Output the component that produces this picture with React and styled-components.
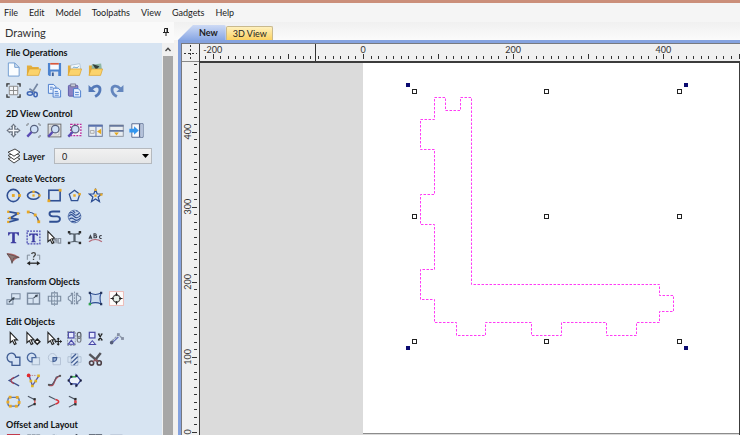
import React from 'react';
import styled, { createGlobalStyle } from 'styled-components';

const COLORS = {
  title: '#cb8f7a',
  menu: '#f5f5f5',
  panel: '#d7e4f2',
  frame: '#84a2df',
  ruler: '#f0f0f0',
  dark: '#3c3c3c',
  text: '#1c1c1c',
  navy: '#2f4f93',
  orange: '#e9a823',
  gray: '#7b8ba0',
  thumb: '#a7a7a7',
  desk: '#dbdbdb',
  vector: '#ff3cf5',
};

const { navy, orange, gray } = COLORS;

const GlobalStyle = createGlobalStyle`
  *, *::before, *::after {
    box-sizing: border-box;
  }

  body {
    margin: 0;
    overflow: hidden;
    background: ${COLORS.menu};
    color: ${COLORS.text};
    font-family: Lato, 'Open Sans', sans-serif;
    font-size: 9px;
  }

  button, select {
    font: inherit;
    color: inherit;
  }
`;

/* Orange node handles that sit on the vector icons */
const Nodes = ({ at, fill = orange, size = 3 }) =>
  at.map(([x, y]) => (
    <rect key={`${x}-${y}`} x={x - size / 2} y={y - size / 2} width={size} height={size} fill={fill} />
  ));

const Pointer = ({ x = 0 }) => (
  <path
    d="M4.5 1.5v11l2.5-2.3 2 4.3 1.8-.9-2-4.1h3.4z"
    transform={`translate(${x} 0)`}
    fill="#fff"
    stroke="#222"
    strokeWidth="1.2"
  />
);

const Lens = () => (
  <>
    <circle cx="8.8" cy="6.6" r="4" fill="#cfe0f7" stroke="#56607c" strokeWidth="1.3" />
    <path d="M6 9.6l-4.6 4.9" stroke="#5a4bb5" strokeWidth="2.6" />
  </>
);

const Folder = ({ children }) => (
  <>
    <path d="M1 13.8V3.6h4.6l1.4 1.6h6.6v8.6z" fill="#e3ad3c" />
    {children}
    <path d="M1 14.3L3.6 7.4h12L13.4 14.3z" fill="#fbd36c" stroke="#d9a02f" strokeWidth=".7" />
  </>
);

const ICONS = {
  'New file': (
    <path d="M2.5 1h6.8l4.7 4.7V15H2.5zM9.3 1v4.7H14" fill="#fafdff" stroke="#6f9cd0" />
  ),
  'Open file': <Folder />,
  'Save file': (
    <>
      <path d="M1 1h14v14H2.4L1 13.6z" fill="#4c83cf" />
      <path d="M3.4 1h9.2v7H3.4z" fill="#f7faff" />
      <path d="M3.4 1h9.2v1.8H3.4z" fill="#d9583d" />
      <path d="M4 10.2h8V15H4z" fill="#dbe3ee" />
      <path d="M5.2 11.2h2V15h-2z" fill="#3a5d95" />
    </>
  ),
  'Import vectors': (
    <Folder>
      <path d="M4 3.4l9.6-1.6 1 6H4z" fill="#f4f9fd" stroke="#9db4c9" strokeWidth=".7" />
      <path d="M6 6.4c2-2.4 4 1.4 6.4-1.6" fill="none" stroke="#5a9ac5" />
    </Folder>
  ),
  'Import bitmap': (
    <Folder>
      <path d="M4 3l10-1.4.8 6.4H4z" fill="#8fb7a6" />
      <path d="M4.6 2.2l7.6 2.4-3.4 3.8z" fill="#333f3c" />
    </Folder>
  ),
  'Job setup': (
    <>
      <path d="M1 4V1h3M12 1h3v3M15 12v3h-3M4 15H1v-3" fill="none" stroke="#333" strokeWidth="1.4" />
      <path d="M3.5 3.5h9v9h-9zM8 3.5v9M3.5 8h9" fill="#f3f5f8" stroke="#888" />
    </>
  ),
  Cut: (
    <>
      <path d="M12.4.8L6.6 10M3.6 6.2L9.6 10" stroke="#7587a3" strokeWidth="1.8" />
      <ellipse cx="4.2" cy="11.2" rx="2.8" ry="1.8" fill="none" stroke="#3e65b4" strokeWidth="1.6" />
      <ellipse cx="10.2" cy="12.2" rx="1.8" ry="2.4" fill="none" stroke="#3e65b4" strokeWidth="1.6" />
    </>
  ),
  Copy: (
    <>
      <path d="M1.5 1.5H7L9.5 4v7h-8z" fill="#e9f2ff" stroke="#4a7ccc" />
      <path d="M6.5 5.5H12L14.5 8v7h-8z" fill="#e9f2ff" stroke="#4a7ccc" />
      <path d="M3.2 4.5h3M3.2 6.5h2M8.2 9h3.4M8.2 11h4.4M8.2 13h4.4" stroke="#4a7ccc" />
    </>
  ),
  Paste: (
    <>
      <rect x="1.5" y="2.5" width="10" height="11.5" rx="1" fill="#8c83c4" stroke="#5c5aa5" />
      <rect x="4" y="1" width="5" height="3" fill="#c9ccd9" stroke="#6d6f8a" strokeWidth=".8" />
      <path d="M7 6h5l2.5 2.5V15H7z" fill="#e9f2ff" stroke="#4a7ccc" />
      <path d="M8.6 10h4M8.6 12.5h4" stroke="#4a7ccc" />
    </>
  ),
  Undo: (
    <>
      <path d="M4 6C8 1.6 13.2 3 12.8 7.6c-.2 3-2.6 5.4-5.2 6.8" fill="none" stroke="#5479b8" strokeWidth="3" />
      <path d="M.6 2v7.6h7.6z" fill="#5479b8" />
    </>
  ),
  Redo: (
    <>
      <path d="M12 6C8 1.6 2.800 3 3.200 7.6c.2 3 2.600 5.400 5.200 6.800" fill="none" stroke="#6486be" strokeWidth="3" />
      <path d="M15.4 2v7.6H7.800z" fill="#6486be" />
    </>
  ),
  Pan: (
    <>
      <path d="M8 .4l3.200 3.800H4.800zM8 15.600l3.200-3.800H4.800zM.4 8l3.800-3.200v6.400zM15.600 8l-3.800-3.200v6.400z" fill="#69727f" />
      <path d="M8 3v10M3 8h10" stroke="#69727f" strokeWidth="4" />
      <path d="M8 2.600v10.800M2.600 8h10.800" stroke="#f4f7fa" strokeWidth="1.400" />
    </>
  ),
  'Zoom interactive': (
    <>
      <path d="M1 3V1h2M13 1h2v2M15 13v2h-2" fill="none" stroke="#555" strokeDasharray="1.5 1" />
      <Lens />
    </>
  ),
  'Zoom to drawing': (
    <>
      <rect x="1.2" y="1.2" width="13.6" height="13.6" fill="#f6f8fa" stroke="#666" />
      <rect x="3.2" y="3.2" width="9.6" height="9.6" fill="none" stroke="#aaa" strokeWidth=".8" />
      <Lens />
    </>
  ),
  'Zoom to selection': (
    <>
      <rect x="4" y="1.4" width="10.8" height="12" fill="#f3eef7" stroke="#bb2a9c" strokeWidth="1.4" strokeDasharray="2 1.2" />
      <Lens />
    </>
  ),
  'Tile side by side': (
    <>
      <rect x=".8" y="2.2" width="14.4" height="12" fill="#e8edf1" stroke="#647397" />
      <path d="M.5 3h15" stroke="#5870ad" strokeWidth="2" />
      <path d="M8.5 4v10" stroke="#5870ad" />
      <path d="M2.5 8h4v3h-4z" fill="none" stroke="#aaa" />
      <path d="M14 6v6L9.6 9z" fill="#e5a91c" />
    </>
  ),
  'Tile above': (
    <>
      <rect x=".8" y="2.2" width="14.4" height="12" fill="#e8edf1" stroke="#8b929d" />
      <path d="M.5 3h15M.5 8.4h15" stroke="#66779c" strokeWidth="1.8" />
      <path d="M5.5 10.2h5L8 13.4z" fill="#e5a91c" />
    </>
  ),
  'Switch to toolpaths': (
    <>
      <path d="M3 .8h12v14.4H3z" fill="#f7f9fc" stroke="#55698f" />
      <path d="M11.4 1v14" stroke="#4b5d85" strokeWidth="1.6" />
      <path d="M12.4 1.4h2.2v13.2h-2.2z" fill="#b3c2dc" />
      <path d="M.4 6h5V3.4L10.4 8l-5 4.6V10h-5z" fill="#3396ee" />
    </>
  ),
  'Draw circle': (
    <>
      <circle cx="7.8" cy="8" r="6.5" fill="none" stroke={navy} strokeWidth="1.7" />
      <Nodes at={[[7.8, 8], [14.4, 8]]} />
    </>
  ),
  'Draw ellipse': (
    <>
      <ellipse cx="8" cy="8" rx="6.4" ry="4" fill="none" stroke={navy} strokeWidth="1.8" />
      <Nodes at={[[8, 8], [14.4, 8], [8, 4]]} size={2.4} />
    </>
  ),
  'Draw rectangle': (
    <>
      <rect x="2" y="2.4" width="12" height="11.2" fill="none" stroke={navy} strokeWidth="1.7" />
      <Nodes at={[[14, 2.4], [2, 13.6]]} />
    </>
  ),
  'Draw polygon': (
    <>
      <path d="M8 2.4l5.6 4.2-2.2 6.8H4.6L2.4 6.6z" fill="none" stroke={navy} strokeWidth="1.3" />
      <Nodes at={[[8, 8], [13.4, 6.6]]} size={2.6} />
    </>
  ),
  'Draw star': (
    <>
      <path
        d="M8 1.6l1.8 4.6 4.8.2-3.8 3.2 1.4 4.8L8 11.6l-4.2 2.8 1.4-4.8L1.4 6.4l4.8-.2z"
        fill="none"
        stroke={navy}
        strokeWidth="1.3"
      />
      <Nodes at={[[8, 8.2], [8, 2], [14.2, 7]]} size={2.4} />
    </>
  ),
  'Draw polyline': (
    <>
      <path d="M2.4 2.8l10.4 2L4 9.8l9.4 1.4L2.4 14" fill="none" stroke={navy} strokeWidth="1.9" />
      <Nodes at={[[2.4, 3], [12.8, 4.8], [4, 9.6], [2.4, 13.8]]} size={2.4} />
    </>
  ),
  'Draw arc': (
    <>
      <path d="M2.4 3.2c6 .6 9.8 3.8 11 10.2" fill="none" stroke={navy} strokeWidth="1.3" />
      <Nodes at={[[2.4, 3.2], [9.8, 6.4], [13.6, 13.6]]} />
    </>
  ),
  'Draw curve': (
    <path
      d="M14 2.6H6.4c-5 0-5 5 0 5.2h4.4c4.4.6 3.8 5.8-.6 5.8H2.4"
      fill="none"
      stroke={navy}
      strokeWidth="2"
    />
  ),
  'Vector texture': (
    <>
      <circle cx="8" cy="8" r="6.8" fill="#c4d4ec" stroke="#4d6ba6" strokeWidth=".8" />
      <path
        d="M1.6 8c2.600-3.600 4.400-1.600 6 0s3.800 2.600 7-1.600M2.400 11c2.600-2.800 4-1 5.600.2 2 1.600 4 1 6.200-1.400M4.600 13.600c1.800-1.200 2.800-.2 4.800.6M2.600 4.600c2.400-1.800 4-.4 5.200 1.200 1.400 1.600 3.400.8 5.600-2M6 1.800c1.200.6 1.600 1.800 2.800 2.200M10 1.600l1.200 1.200"
        fill="none"
        stroke={navy}
        strokeWidth="1.2"
      />
    </>
  ),
  'Draw text': (
    <path d="M2.2 2.4h11.6v3.4h-1.2c-.2-1.4-.8-2-3.2-2v8.8l1.6.8v.6H5v-.6l1.6-.8V3.8c-2.4 0-3 .6-3.2 2H2.2z" fill="#3c3ca0" />
  ),
  'Draw auto text': (
    <>
      <rect x="1.2" y="1.2" width="13.6" height="13.6" fill="none" stroke="#4646b0" strokeWidth="1.3" strokeDasharray="2 1.2" />
      <path d="M3.4 3.6h9.2v2.8h-1c-.2-1-.8-1.4-2.4-1.4v6.8l1.4.6v.6H5.4v-.6l1.4-.6V5c-1.6 0-2.2.4-2.4 1.4h-1z" fill="#3c3ca0" />
    </>
  ),
  'Edit text': (
    <>
      <Pointer x={-3.5} />
      <path d="M8.5 14V9h2v5M8.5 11.5h2M12 9v5h2.6V9z" fill="none" stroke="#8a93a1" strokeWidth="1.2" />
    </>
  ),
  'Text to box': (
    <>
      <path d="M2.4 2.6c3.8 1.6 7.4 1.6 11.2 0v2.8h-1C11.4 4.4 10.4 5 9.2 5v6.6l3.4.8v1c-3-.8-6.2-.8-9.2 0v-1l3.4-.8V5C5.6 5 4.6 4.4 3.4 5.4h-1z" fill="#55606b" />
      <Nodes at={[[2.2, 2.4], [13.8, 2.4], [2.2, 13.8], [13.8, 13.8]]} fill="#2b2b2b" size={2.6} />
    </>
  ),
  'Text on curve': (
    <>
      <path d="M1 9.4L2.6 6l1.6 3.4M1.6 8.4h2M6.4 4v4.2h1.8c1.4 0 1.4-2.1 0-2.1H6.4h1.4c1.2 0 1.2-2.1 0-2.1zM14.6 6c-2.8-1-3.4 3.6 0 3" fill="none" stroke="#3f4149" strokeWidth="1.2" />
      <path d="M1 12.6c4-3 9.6-3 13.8 0" fill="none" stroke="#b56a79" strokeWidth="1.4" />
    </>
  ),
  'Trace bitmap': (
    <>
      <path d="M.8 2.6c4-.8 9.6 1 13.8 4.2-3 .6-4.6 2.4-8 5.4z" fill="#b5686a" />
      <path d="M1 3l5.4 1.4L14 7l-6 .6-1.6 5.6L5 8z" fill="#8d7775" stroke="#55494b" strokeWidth=".8" />
    </>
  ),
  Dimension: (
    <>
      <path d="M1.4 9.4v-5h3M11.6 4.4h3v5" fill="none" stroke="#7b8794" />
      <path d="M6 3.2c.4-2 4-2 4 .2C10 5 8 5 8 7M8 8.4v1.2" fill="none" stroke="#444" strokeWidth="1.4" />
      <path d="M3 13h10" stroke="#222" strokeWidth="1.3" />
      <path d="M.8 13l3.6-2.4v4.8zM15.2 13l-3.6-2.4v4.8z" fill="#222" />
    </>
  ),
  'Move objects': (
    <>
      <path d="M6 3h9v5.4H6zM1 9.4h6.4V14H1z" fill="none" stroke={gray} strokeWidth="1.1" />
      <path d="M3 12l5-4.4" stroke="#3b4653" strokeWidth="1.2" />
      <path d="M9.2 6.4L5.8 7.4l2.6 2.4z" fill="#3b4653" />
    </>
  ),
  'Set size': (
    <>
      <path d="M1.6 2.4h12.8v11.4H1.6z" fill="none" stroke={gray} strokeWidth="1.5" />
      <path d="M1.6 7.8h6v6" fill="none" stroke={gray} />
      <path d="M8 7.6L11.4 4.8" stroke="#3b4653" strokeWidth="1.1" />
      <path d="M12.8 3.6l-3.4.6 2.4 2.6z" fill="#3b4653" />
    </>
  ),
  'Align objects': (
    <>
      <path d="M5 2h6v12H5zM1.4 5.6h13.2v5H1.4z" fill="none" stroke={gray} strokeWidth="1.2" />
      <path d="M8 0v16" stroke={gray} strokeWidth=".8" strokeDasharray="2 1" />
    </>
  ),
  'Mirror objects': (
    <>
      <path d="M6 2.4v11.2H4.6v-2.4L1.4 9V6.4l3.2-2v-2zM10 2.4v11.2h1.4v-2.4L14.6 9V6.4l-3.2-2v-2z" fill="none" stroke={gray} strokeWidth="1.1" />
      <path d="M8 .6v15" stroke={gray} strokeWidth=".9" strokeDasharray="2 1" />
    </>
  ),
  'Distort object': (
    <>
      <path d="M2 2.2c4 2 8 2 12 0-1.6 4-1.6 7.6 0 11.6-4-1.8-8-1.8-12 0 1.6-4 1.6-7.6 0-11.6z" fill="#c9daf0" stroke={navy} strokeWidth="1.2" />
      <Nodes at={[[2, 2], [14, 2], [14, 14]]} fill="#27375f" size={2.4} />
      <Nodes at={[[2, 14]]} fill="#2fa44a" size={2.6} />
    </>
  ),
  'Center in material': (
    <>
      <rect x=".6" y=".6" width="14.8" height="14.8" fill="#fdfcfb" stroke="#edb9b5" />
      <circle cx="8" cy="8" r="3.6" fill="#e6f0ea" stroke="#555" strokeWidth="1.1" />
      <path d="M8 1.6v3M8 11.4v3M1.6 8h3M11.4 8h3" stroke="#222" strokeWidth="1.2" />
      <path d="M8 5.4l1.6-2H6.400zM8 10.600l1.600 2H6.400zM5.400 8l-2-1.600v3.200zM10.600 8l2-1.600v3.200z" fill="#222" />
    </>
  ),
  Select: <Pointer />,
  'Node editing': (
    <>
      <Pointer x={-3.5} />
      <path d="M12 8.6l2.8 2.8-2.8 2.8-2.8-2.8z" fill="#fff" stroke="#222" strokeWidth="1.6" />
    </>
  ),
  'Interactive transform': (
    <>
      <Pointer x={-3.5} />
      <path d="M12 7.6v7M8.6 11.2h7" stroke="#222" strokeWidth="1.3" />
      <path d="M12 6.8l1.8 2h-3.6zM12 15.6l1.8-2h-3.6zM7.8 11.2l2-1.8V13zM16 11.2l-2-1.8V13z" fill="#222" />
    </>
  ),
  Group: (
    <>
      <rect x="1.4" y="1.4" width="6" height="6" fill="#e6e9ff" stroke="#4747a5" strokeWidth="1.3" />
      <path d="M1.2 14.2l3.4-4.4L8 14.2z" fill="#e6e9ff" stroke="#4747a5" strokeWidth="1.1" />
      <path d="M.4.6h8.4v15H.4z" fill="none" stroke="#7b8390" strokeWidth=".8" strokeDasharray="2 1" />
      <rect x="11" y="1.4" width="3.8" height="6.4" rx="1.9" fill="none" stroke="#555b63" strokeWidth="1.3" />
      <rect x="11" y="5.6" width="3.8" height="6.4" rx="1.9" fill="none" stroke="#777d85" strokeWidth="1.3" />
    </>
  ),
  Ungroup: (
    <>
      <rect x="1.4" y="1.4" width="6" height="6" fill="#e6e9ff" stroke="#4747a5" strokeWidth="1.3" />
      <path d="M1.2 14.4l3.4-4L8 14.4z" fill="#e6e9ff" stroke="#4747a5" strokeWidth="1.1" />
      <path d="M11.4 3.4l3.2 6M14.6 3.4l-3.2 6M10.6 3.2h2M13.6 3.2h2M10.6 9.4h2M13.6 9.4h2" stroke="#222" strokeWidth="1.3" />
    </>
  ),
  Measure: (
    <>
      <path d="M3 11l7-7 4.4 4" fill="none" stroke="#8d99ab" strokeWidth="1.4" strokeDasharray="3 1" />
      <path d="M3.6 12.4L10 6.4" stroke="#5b66b5" strokeWidth="1.1" />
      <circle cx="2.8" cy="12.4" r="1.9" fill="#555c78" />
      <Nodes at={[[10, 3.8], [14.4, 8]]} fill="#858fa3" />
    </>
  ),
  Weld: (
    <path
      d="M1.2 6a4.6 4.6 0 0 1 9.2-.4h4.4v8.6H6.4v-3.6A4.6 4.6 0 0 1 1.2 6z"
      fill="#d3e1f3"
      stroke="#3f5c92"
      strokeWidth="1.4"
    />
  ),
  Subtract: (
    <>
      <path d="M10.4 6h4v7.6H6.6v-3" fill="none" stroke="#a9b9cd" strokeWidth="1.2" />
      <path d="M6.4 10.4A4.6 4.6 0 1 1 10.6 6H6.4z" fill="#d3e1f3" stroke="#4a689e" strokeWidth="1.4" />
    </>
  ),
  Intersect: (
    <>
      <circle cx="5.8" cy="6" r="4.4" fill="none" stroke="#b3c1d4" />
      <path d="M6.4 6h8v7.6h-8z" fill="none" stroke="#b3c1d4" />
      <path d="M6.4 6h4c0 2.6-1.4 4-4 4.2z" fill="#9cb3d8" stroke="#3f5c92" strokeWidth="1.2" />
    </>
  ),
  'Trim overlap': (
    <>
      <path d="M1 5h14v6H1z" fill="none" stroke="#adbccf" strokeWidth=".9" />
      <path d="M4.4 1.8h7.2v12.4H4.4z" fill="#dbe6f5" stroke="#9db0cb" strokeWidth=".8" />
      <path d="M4.600 7l5-4.800M4.600 11.600l6.800-6.600M7 14l4.400-4.200" stroke="#3f5c92" strokeWidth="1.4" />
    </>
  ),
  Trim: (
    <>
      <path d="M1.4 2.2l8.8 7.6M13.6 1L7 9.4" stroke="#55555b" strokeWidth="2.6" />
      <circle cx="3.8" cy="11.8" r="2.2" fill="none" stroke="#4c3f45" strokeWidth="1.7" />
      <circle cx="12" cy="11.6" r="2.2" fill="none" stroke="#4c3f45" strokeWidth="1.7" />
      <path d="M5.4 10.4L8 8.2l2.6 2" fill="none" stroke="#96565f" strokeWidth="1.4" />
    </>
  ),
  Fillet: (
    <>
      <path d="M14 2.2L3.4 8 14 13.8" fill="none" stroke="#3e4f8a" strokeWidth="1.4" />
      <path d="M8.6 4.6C4.4 6.4 4.4 9.4 8.6 11.4" fill="none" stroke="#b0404f" strokeWidth="1.2" />
    </>
  ),
  'Extend vectors': (
    <>
      <path d="M3.4 2.6l3.4 11 6.6-10" fill="none" stroke="#5752a5" strokeWidth="1.4" />
      <path d="M3.4 2.6h8" stroke="#b98a8e" strokeDasharray="1.6 1" />
      <circle cx="2.8" cy="2.6" r="2" fill="#e2282c" />
      <Nodes at={[[13.4, 3], [6.8, 13.8], [5.2, 8.6], [10.4, 8.6]]} fill="#dfb321" size={2.8} />
    </>
  ),
  'Fit curves': (
    <>
      <path d="M2 13.2c8.4 2 3.2-8.4 12-10" fill="none" stroke="#b54954" strokeWidth="1.6" />
      <path d="M2 12.4h3.4l3-4.4 1.4-3.6 4.2-1.6" fill="none" stroke="#545b6b" strokeWidth="1.1" />
      <Nodes at={[[2, 12.6], [14, 3]]} fill="#555" size={2} />
    </>
  ),
  'Close vectors': (
    <>
      <path d="M4.4 4h5.4V2l5 6-5 6v-2.4H4.4L1.6 8z" fill="#edf2fb" stroke="#33439b" strokeWidth="1.3" />
      <path d="M4 4h5.6" stroke="#46b955" strokeWidth="1.6" />
      <Nodes at={[[4.6, 4], [1.8, 8], [4.6, 11.8], [10, 13.4], [14.6, 8], [10, 3]]} fill="#1b1f39" size={2.2} />
    </>
  ),
  'Join vectors': (
    <>
      <rect x="2" y="3.6" width="12" height="9.4" rx="3" fill="none" stroke="#5b76ac" strokeWidth="1.4" />
      <Nodes at={[[2, 8.6], [4.4, 3.4], [12, 3.6], [14, 9], [11, 13], [4.6, 13]]} />
    </>
  ),
  'Join with line': (
    <>
      <path d="M2 2.4l7 3.4M2 14l7-3.4" stroke="#4c5563" strokeWidth="1.2" />
      <path d="M9.4 6v4.4" stroke="#d35252" strokeWidth="1.4" />
      <Nodes at={[[9.2, 5.6], [9.2, 10.8]]} fill="#2c2c2c" size={2.4} />
    </>
  ),
  'Join with curve': (
    <>
      <path d="M2 2.4l7 3.4M2 14l7-3.4" stroke="#4c5563" strokeWidth="1.2" />
      <path d="M9 5.8c4.6 1 4.6 3.8 0 4.8" fill="none" stroke="#d8343c" strokeWidth="1.6" />
    </>
  ),
  'Join at midpoint': (
    <>
      <path d="M2 2.4l6.4 3.2L9 8l-.6 2.6L2 14" fill="none" stroke="#4c5563" strokeWidth="1.2" />
      <Nodes at={[[9, 5.4], [9, 11]]} fill="#2c2c2c" size={2.4} />
      <Nodes at={[[9, 8.2]]} fill="#e0444a" size={2.8} />
    </>
  ),
  Offset: (
    <path d="M1 .8h14M2 1v14M5 1v14M8 1v14M11 1v14M14 1v14" fill="none" stroke="#c23a4c" strokeWidth="1.5" />
  ),
  'Array copy': <path d="M1.600.800h3.600v4H1.600zM6.400.800H10v4H6.400zM11.200.800h3.600v4h-3.600z" fill="none" stroke="#8791a0" />,
  'Circular copy': <circle cx="8" cy="7" r="6" fill="none" stroke="#8494aa" strokeDasharray="3 2" />,
  'Copy along vectors': <path d="M2 12c2-6 6-2 8-11.400l3 3" fill="none" stroke="#4c5460" strokeWidth="1.6" />,
  'Nest parts': <path d="M1.600.800h5.600v5H1.600zM8.800.800h5.600v5H8.800z" fill="none" stroke="#474d5c" strokeWidth="1.3" />,
  'Plate production': <path d="M1.400 1.200h13v10h-13z" fill="none" stroke="#9ba8ba" />,
};

const SECTIONS = [
  {
    title: 'File Operations',
    rows: [
      ['New file', 'Open file', 'Save file', 'Import vectors', 'Import bitmap'],
      ['Job setup', 'Cut', 'Copy', 'Paste', 'Undo', 'Redo'],
    ],
  },
  {
    title: '2D View Control',
    layer: true,
    rows: [
      ['Pan', 'Zoom interactive', 'Zoom to drawing', 'Zoom to selection', 'Tile side by side', 'Tile above', 'Switch to toolpaths'],
    ],
  },
  {
    title: 'Create Vectors',
    rows: [
      ['Draw circle', 'Draw ellipse', 'Draw rectangle', 'Draw polygon', 'Draw star'],
      ['Draw polyline', 'Draw arc', 'Draw curve', 'Vector texture'],
      ['Draw text', 'Draw auto text', 'Edit text', 'Text to box', 'Text on curve'],
      ['Trace bitmap', 'Dimension'],
    ],
  },
  {
    title: 'Transform Objects',
    rows: [
      ['Move objects', 'Set size', 'Align objects', 'Mirror objects', 'Distort object', 'Center in material'],
    ],
  },
  {
    title: 'Edit Objects',
    rows: [
      ['Select', 'Node editing', 'Interactive transform', 'Group', 'Ungroup', 'Measure'],
      ['Weld', 'Subtract', 'Intersect', 'Trim overlap', 'Trim'],
      ['Fillet', 'Extend vectors', 'Fit curves', 'Close vectors'],
      ['Join vectors', 'Join with line', 'Join with curve', 'Join at midpoint'],
    ],
  },
  {
    title: 'Offset and Layout',
    rows: [
      ['Offset', 'Array copy', 'Circular copy', 'Copy along vectors', 'Nest parts', 'Plate production'],
    ],
  },
];

const MENU = ['File', 'Edit', 'Model', 'Toolpaths', 'View', 'Gadgets', 'Help'];

const Tools = ({ title, rows, layer }) => (
  <Section>
    <SectionTitle>{title}</SectionTitle>
    {rows.map((row) => (
      <ToolRow key={row[0]}>
        {row.map((name) => (
          <ToolButton key={name} type="button" aria-label={name}>
            <svg width="15" height="15" viewBox="0 0 16 16">{ICONS[name]}</svg>
          </ToolButton>
        ))}
      </ToolRow>
    ))}
    {layer && (
      <LayerRow>
        <svg width="14" height="16" viewBox="0 0 14 16">
          <path d="M1 10.6l7-2.2 5 2.6-6 4z" fill="#fff" stroke="#444" />
          <path d="M1 7.4l7-2.6 5 2.8-6 4z" fill="#fff" stroke="#444" />
          <path d="M1 4.2L8 1l5 3.2-6 4z" fill="#fff" stroke="#444" />
        </svg>
        <LayerLabel htmlFor="layer">Layer</LayerLabel>
        <SelectBox>
          <LayerSelect id="layer" defaultValue="0">
            <option value="0">0</option>
            <option value="1">1</option>
          </LayerSelect>
          <SelectArrow viewBox="0 0 7 4"><path d="M0 0h7L3.5 4z" /></SelectArrow>
        </SelectBox>
      </LayerRow>
    )}
  </Section>
);

/* Pixels per drawing unit, the same on both rulers */
const SCALE = 0.751;
const range = (from, to) =>
  Array.from({ length: (to - from) / 10 + 1 }, (_, i) => from + i * 10);

const TopRuler = () => (
  <RulerSvg>
    {range(-210, 500).map((unit) => {
      const x = Math.round(163 + unit * SCALE);
      const major = unit % 100 === 0;
      return <rect key={unit} x={x} y={major ? 10 : 12} width="1" height={major ? 5 : 3} />;
    })}
    {[-200, 0, 200, 400].map((unit) => (
      <text key={unit} x={163 + unit * SCALE} y="9" textAnchor="middle">{unit}</text>
    ))}
    <rect x="115" y="0" width="1" height="17" />
  </RulerSvg>
);

const SideRuler = () => (
  <RulerSvg>
    {range(0, 490).map((unit) => {
      const y = Math.round(370 - unit * SCALE);
      const major = unit % 100 === 0;
      return <rect key={unit} x={major ? 10 : 12} y={y} width={major ? 5 : 3} height="1" />;
    })}
    {[0, 100, 200, 300, 400].map((unit) => (
      <text
        key={unit}
        textAnchor="middle"
        transform={`translate(9 ${370 - unit * SCALE}) rotate(-90)`}
      >
        {unit}
      </text>
    ))}
  </RulerSvg>
);

const Drawing = () => (
  <DrawingSvg role="img" aria-label="Selected vector">
    <path
      d="M71.5 34.5h11v13h15v-13h11v187h188v11h14v16h-14v11h-23v13h-30v-13h-45v13h-30v-13h-46v13h-29v-13h-22v-23h-14v-30h14v-45h-14v-30h14v-45h-14v-30h14z"
      fill="none"
      stroke={COLORS.vector}
      strokeDasharray="2.5 1.5"
    />
    {[28, 153, 278].map((y) =>
      [51, 183, 316].map((x) => (
        <rect key={`${x}-${y}`} x={x - 1.5} y={y - 1.5} width="4" height="4" fill="#fff" stroke="#222" />
      ))
    )}
    {[20, 283].map((y) =>
      [43, 321].map((x) => (
        <rect key={`${x}-${y}`} x={x} y={y} width="4" height="4" fill="#0a0a70" />
      ))
    )}
  </DrawingSvg>
);

const App = () => (
  <>
    <GlobalStyle />
    <Window>
      <TitleBar />
      <MenuBar>
        {MENU.map((item) => (
          <MenuItem key={item} type="button">{item}</MenuItem>
        ))}
      </MenuBar>
      <Body>
        <Sidebar>
          <PanelHeader>
            <PanelTitle>Drawing</PanelTitle>
            <PinButton type="button" aria-label="Pin panel">
              <svg width="6" height="8" viewBox="0 0 6 8">
                <path d="M1.5.5h3v4h-3zM0 4.5h6M3 4.5V8" fill="none" stroke="#222" />
                <path d="M3.5 0h1.5v4.5H3.5z" fill="#222" />
              </svg>
            </PinButton>
          </PanelHeader>
          <PanelBody>
            <Panel>
              {SECTIONS.map((section) => (
                <Tools key={section.title} {...section} />
              ))}
            </Panel>
            <ScrollBar>
              <ScrollUp type="button" aria-label="Scroll up">
                <svg width="6" height="5" viewBox="0 0 6 5">
                  <path d="M.5 4L3 1.2 5.5 4" fill="none" stroke="#444" strokeWidth="1.3" />
                </svg>
              </ScrollUp>
              <ScrollThumb />
            </ScrollBar>
          </PanelBody>
        </Sidebar>
        <Workspace>
          <Tabs role="tablist">
            <ActiveTab type="button" role="tab" aria-selected="true">New</ActiveTab>
            <Tab type="button" role="tab" aria-selected="false">3D View</Tab>
          </Tabs>
          <ViewFrame>
            <Corner>
              <svg width="17" height="17" viewBox="0 0 17 17">
                <path d="M8.5 1v15M2 9.5h13" stroke="#333" strokeDasharray="2 2" />
              </svg>
            </Corner>
            <TopRulerCell><TopRuler /></TopRulerCell>
            <SideRulerCell><SideRuler /></SideRulerCell>
            <Desk>
              <Sheet><Drawing /></Sheet>
            </Desk>
          </ViewFrame>
        </Workspace>
      </Body>
    </Window>
  </>
);

const Window = styled.div`
  display: flex;
  flex-direction: column;
  height: 100vh;
`;

const TitleBar = styled.div`
  flex: none;
  height: 3px;
  background: ${COLORS.title};
`;

const MenuBar = styled.nav`
  display: flex;
  flex: none;
  align-items: center;
  gap: 11px;
  height: 19px;
  padding: 0 4px;
  background: ${COLORS.menu};
`;

const BareButton = styled.button`
  padding: 0;
  border: none;
  background: none;
`;

const MenuItem = styled(BareButton)`
  line-height: 12px;
`;

const Body = styled.div`
  display: flex;
  flex: 1;
  min-height: 0;
`;

const Sidebar = styled.aside`
  display: flex;
  flex: none;
  flex-direction: column;
  width: 174px;
`;

const PanelHeader = styled.header`
  display: flex;
  flex: none;
  align-items: center;
  justify-content: space-between;
  height: 21px;
  padding: 0 5px;
  background: #fafafa;
`;

const PanelTitle = styled.h1`
  margin: 0;
  color: #333;
  font-size: 11px;
  font-weight: 400;
`;

const PinButton = styled(BareButton)`
  display: flex;
  padding-bottom: 2px;
`;

const PanelBody = styled.div`
  display: flex;
  flex: 1;
  min-height: 0;
`;

const Panel = styled.div`
  flex: 1;
  overflow: hidden;
  padding: 3px 10px 0 3px;
  background: ${COLORS.panel};
`;

const ScrollBar = styled.div`
  display: flex;
  flex-direction: column;
  width: 12px;
  padding: 0 1px;
  background: #f0f0f0;
`;

const ScrollUp = styled(BareButton)`
  display: flex;
  align-items: center;
  justify-content: center;
  height: 13px;
`;

const ScrollThumb = styled.div`
  flex: 1;
  background: ${COLORS.thumb};
`;

const Section = styled.section`
  margin-bottom: 6px;
`;

const SectionTitle = styled.h2`
  margin: 0;
  padding-left: 3px;
  color: #111;
  font-size: 9px;
  font-weight: 700;
  line-height: 13px;
`;

const ToolRow = styled.div`
  display: grid;
  grid-template-columns: repeat(7, 1fr);
  height: 21px;
  margin-right: 5px;
`;

const ToolButton = styled(BareButton)`
  display: flex;
  align-items: center;
  justify-content: center;
`;

const LayerRow = styled.div`
  display: flex;
  align-items: center;
  height: 25px;
  padding: 7px 0 2px 4px;
`;

const LayerLabel = styled.label`
  flex: 1;
  padding-left: 2px;
  font-weight: 700;
`;

const SelectBox = styled.div`
  position: relative;
  flex: none;
  width: 98px;
  height: 16px;
`;

const LayerSelect = styled.select`
  appearance: none;
  width: 100%;
  height: 100%;
  padding: 0 7px;
  border: 1px solid #b5b9be;
  border-radius: 0;
  background: linear-gradient(#f1f1f1, #e5e6e7);
`;

const SelectArrow = styled.svg`
  position: absolute;
  top: 6px;
  right: 3px;
  width: 7px;
  height: 4px;
  pointer-events: none;
`;

const Workspace = styled.main`
  display: flex;
  flex: 1;
  flex-direction: column;
  min-width: 0;
  padding-left: 4px;
  background: linear-gradient(#f0f0f0, #fbfbfb 18px, #f3f1ef 18px);
`;

const Tabs = styled.div`
  display: flex;
  flex: none;
  align-items: flex-end;
  height: 18px;
`;

const Tab = styled.button`
  height: 14px;
  padding: 0 5px 0 6px;
  border: 1px solid #c9b98c;
  border-bottom: none;
  border-radius: 2px 2px 0 0;
  background: linear-gradient(#fff1bd, #fbd161);
  line-height: 12px;
`;

const ActiveTab = styled(Tab)`
  height: 15px;
  padding: 0 8px 0 21px;
  border: none;
  background: linear-gradient(#cddaf5, #89a7e4);
  clip-path: polygon(0 100%, 15px 0, 100% 0, 100% 100%);
  font-weight: 700;
`;

const ViewFrame = styled.div`
  display: grid;
  flex: 1;
  grid-template-columns: 17px 1fr;
  grid-template-rows: 18px 1fr;
  min-height: 0;
  padding: 1px 0 0 1px;
  border: solid ${COLORS.frame};
  border-width: 3px 0 0 3px;
  box-shadow: inset 1px 1px 0 #77797f;
`;

const Corner = styled.div`
  border-bottom: 1px solid #888;
  background: ${COLORS.ruler};
`;

const TopRulerCell = styled.div`
  border-bottom: 1px solid ${COLORS.dark};
  border-left: 1px solid ${COLORS.dark};
  background: ${COLORS.ruler};
`;

const SideRulerCell = styled.div`
  min-height: 0;
  background: ${COLORS.ruler};
`;

const RulerSvg = styled.svg`
  display: block;
  width: 100%;
  height: 100%;
  fill: #333;
  shape-rendering: crispEdges;
`;

const Desk = styled.div`
  display: flex;
  min-height: 0;
  padding: 0 0 1px 163px;
  border: solid ${COLORS.dark};
  border-width: 1px 1px 0 1px;
  background: ${COLORS.desk};
`;

const Sheet = styled.div`
  flex: 1;
  border-bottom: 1px solid #8c8c8c;
  background: #fff;
`;

const DrawingSvg = styled.svg`
  display: block;
  width: 100%;
  height: 100%;
`;

export default App;
